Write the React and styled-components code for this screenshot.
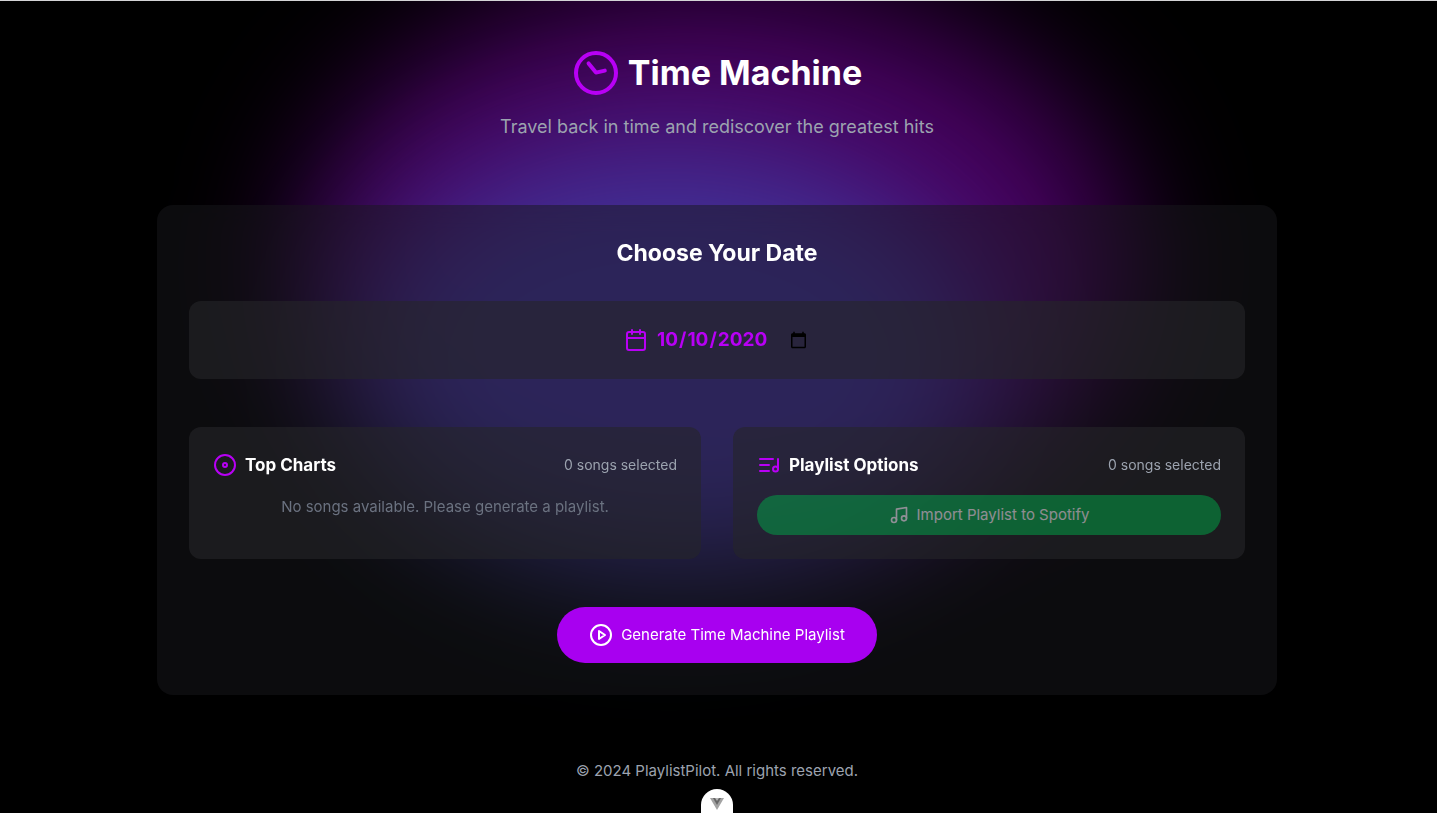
import React from "react";
import styled, { createGlobalStyle } from "styled-components";

const GlobalStyle = createGlobalStyle`
  *, *::before, *::after { box-sizing: border-box; }
  body { margin: 0; background: #000; color: #fff; font: 400 15px/24px Inter, "Liberation Sans", sans-serif; }
  h1, h2, h3, p { margin: 0; }
  button, input { font: inherit; }
`;

const Page = styled.div`
  position: relative;
  isolation: isolate;
  min-height: 100vh;
  display: flex;
  flex-direction: column;
  align-items: center;
  padding: 48px 19px 0 16px;
  border-top: 1px solid #d4d4d6;
  background: #000;
  overflow: hidden;
`;

const Glow = styled.div`
  position: absolute;
  z-index: -1;
  top: ${(p) => p.$top}px;
  left: calc(50% + ${(p) => p.$shift}px);
  width: ${(p) => p.$width}px;
  height: ${(p) => p.$height}px;
  border-radius: 50%;
  background: ${(p) => p.$color};
  filter: blur(64px);
`;

const Header = styled.header`
  display: flex;
  flex-direction: column;
  align-items: center;
  gap: 16px;
  text-align: center;
`;

const Title = styled.h1`
  display: flex;
  align-items: center;
  gap: 8px;
  font-size: 34px;
  line-height: 48px;
  font-weight: 700;
`;

const Tagline = styled.p`
  font-size: 18px;
  line-height: 28px;
  color: #9ca3af;
`;

const Card = styled.main`
  width: 100%;
  max-width: 1120px;
  margin-top: 64px;
  padding: 32px;
  border-radius: 16px;
  background: rgba(24, 24, 27, 0.5);
  backdrop-filter: blur(12px);
  display: flex;
  flex-direction: column;
`;

const CardTitle = styled.h2`
  font-size: 23px;
  line-height: 32px;
  font-weight: 700;
  text-align: center;
`;

const Panel = styled.section`
  padding: 24px;
  border-radius: 12px;
  background: rgba(39, 39, 42, 0.6);
`;

const DatePanel = styled(Panel)`
  margin-top: 32px;
  display: flex;
  align-items: center;
  justify-content: center;
  gap: 8px;
`;

const DateInput = styled.input`
  width: 154px;
  height: 30px;
  padding: 0;
  border: 0;
  background: transparent;
  color: #b800f5;
  font-size: 19px;
  font-weight: 700;
  outline: none;
`;

const Columns = styled.div`
  display: grid;
  grid-template-columns: 1fr 1fr;
  gap: 32px;
  margin-top: 48px;
`;

const PanelHead = styled.div`
  display: flex;
  align-items: center;
  justify-content: space-between;
  margin-bottom: 16px;
`;

const PanelTitle = styled.h3`
  display: flex;
  align-items: center;
  gap: 8px;
  font-size: 17px;
  line-height: 28px;
  font-weight: 700;
`;

const Count = styled.span`
  font-size: 14px;
  line-height: 20px;
  color: #9ca3af;
`;

const Empty = styled.p`
  text-align: center;
  color: #6b7280;
`;

const PillButton = styled.button`
  display: flex;
  align-items: center;
  justify-content: center;
  gap: 8px;
  border: 0;
  border-radius: 28px;
  color: #fff;
  cursor: pointer;
`;

const ImportButton = styled(PillButton)`
  width: 100%;
  height: 40px;
  background: #00aa48;
  opacity: 0.5;
`;

const GenerateButton = styled(PillButton)`
  align-self: center;
  height: 56px;
  margin-top: 48px;
  padding: 0 32px;
  background: #a800f0;
`;

const Footer = styled.footer`
  margin-top: 64px;
  padding-bottom: 28px;
  color: #9ca3af;
`;

const DevTab = styled.button`
  position: absolute;
  bottom: 0;
  left: 50%;
  margin-left: -18px;
  width: 32px;
  height: 24px;
  padding: 6px 0 0;
  display: grid;
  place-items: center;
  border: 0;
  border-radius: 16px 16px 0 0;
  background: #fff;
`;

const IconSvg = styled.svg`
  display: block;
  flex: none;
  fill: none;
  stroke: ${(p) => p.$color || "currentColor"};
  stroke-width: 2;
  stroke-linecap: round;
  stroke-linejoin: round;
`;

const Icon = ({ size = 24, color, children }) => (
  <IconSvg width={size} height={size} viewBox="0 0 24 24" $color={color} aria-hidden="true">
    {children}
  </IconSvg>
);

const accent = "#b800f5";

export default function App() {
  return (
    <>
      <GlobalStyle />
      <Page>
        <Glow $top={-20} $shift={-420} $width={830} $height={570} $color="rgba(184, 0, 245, 0.38)" />
        <Glow $top={140} $shift={-370} $width={640} $height={440} $color="rgba(59, 130, 246, 0.38)" />
        <Header>
          <Title>
            <Icon size={48} color={accent}>
              <circle cx="12" cy="12" r="10" />
              <path d="m8.3 7.2 3.7 4.6 4.4-1" />
            </Icon>
            Time Machine
          </Title>
          <Tagline>Travel back in time and rediscover the greatest hits</Tagline>
        </Header>
        <Card>
          <CardTitle>Choose Your Date</CardTitle>
          <DatePanel>
            <Icon color={accent}>
              <path d="M8 2v4M16 2v4M3 10h18" />
              <rect x="3" y="4" width="18" height="18" rx="2" />
            </Icon>
            <DateInput type="date" aria-label="Playlist date" defaultValue="2020-10-10" />
          </DatePanel>
          <Columns>
            <Panel>
              <PanelHead>
                <PanelTitle>
                  <Icon color={accent}>
                    <circle cx="12" cy="12" r="10" />
                    <circle cx="12" cy="12" r="2" />
                  </Icon>
                  Top Charts
                </PanelTitle>
                <Count>0 songs selected</Count>
              </PanelHead>
              <Empty>No songs available. Please generate a playlist.</Empty>
            </Panel>
            <Panel>
              <PanelHead>
                <PanelTitle>
                  <Icon color={accent}>
                    <path d="M21 16V6" />
                    <circle cx="18.5" cy="16" r="2.5" />
                    <path d="M12 12H3M16 6H3M12 18H3" />
                  </Icon>
                  Playlist Options
                </PanelTitle>
                <Count>0 songs selected</Count>
              </PanelHead>
              <ImportButton type="button">
                <Icon size={20}>
                  <path d="M9 18V5l12-2v13" />
                  <circle cx="6" cy="18" r="3" />
                  <circle cx="18" cy="16" r="3" />
                </Icon>
                Import Playlist to Spotify
              </ImportButton>
            </Panel>
          </Columns>
          <GenerateButton type="button">
            <Icon>
              <circle cx="12" cy="12" r="10" />
              <path d="m10 8 6 4-6 4z" />
            </Icon>
            Generate Time Machine Playlist
          </GenerateButton>
        </Card>
        <Footer>© 2024 PlaylistPilot. All rights reserved.</Footer>
        <DevTab type="button" aria-label="Toggle Vue DevTools">
          <svg width="14" height="12" viewBox="0 0 14 12" aria-hidden="true">
            <path d="M0 0h14L7 12z" fill="#a3a3a3" />
            <path d="M3 0h8L7 7z" fill="#666" />
            <path d="M5 0h4L7 3z" fill="#b5b5b5" />
          </svg>
        </DevTab>
      </Page>
    </>
  );
}
